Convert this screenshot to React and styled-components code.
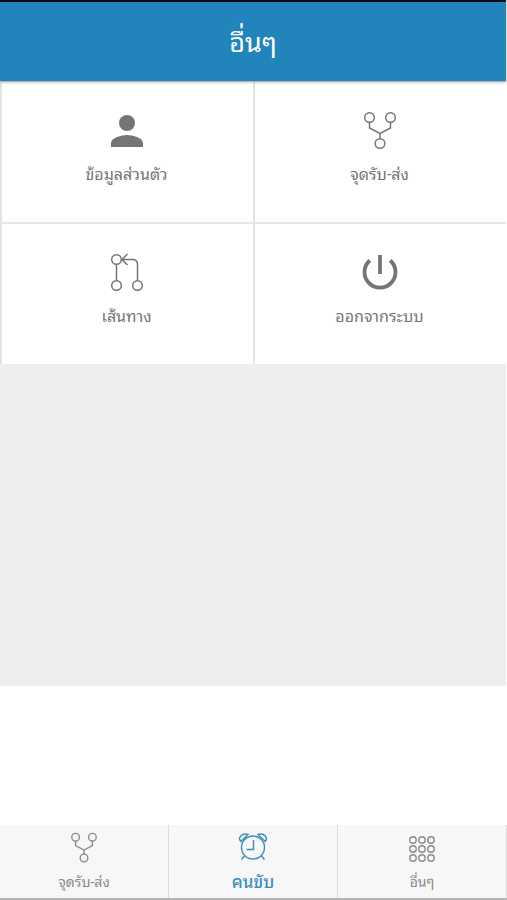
import React from 'react'
import styled, { createGlobalStyle, css } from 'styled-components'

const GlobalStyle = createGlobalStyle`
  * {
    box-sizing: border-box;
  }

  body {
    margin: 0;
    background: #fff;
    font-family: Roboto, 'Noto Sans Thai Looped', 'Noto Sans Thai', 'Noto Sans', sans-serif;
  }
`

const resetButton = css`
  margin: 0;
  padding: 0;
  border: 0;
  font-family: inherit;
  cursor: pointer;
`

const Screen = styled.div`
  display: flex;
  flex-direction: column;
  min-height: 100vh;
  padding-right: 1px;
`

const Header = styled.header`
  position: relative;
  display: flex;
  align-items: center;
  justify-content: center;
  height: 81px;
  padding-top: 2px;
  border-top: 2px solid #060a1c;
  background: #2185bb;
  box-shadow: 0 1px 3px rgba(0, 0, 0, 0.35);
`

const Title = styled.h1`
  margin: 0;
  color: #fff;
  font-size: 27px;
  font-weight: 400;
  line-height: 40px;
`

const Content = styled.main`
  flex: 1;
  margin-bottom: 139px;
  background: #eee;
`

const Grid = styled.div`
  display: grid;
  grid-template-columns: 1fr 1fr;
  row-gap: 2px;
  padding-top: 1px;
  background: #e6e6e6;
`

const Tile = styled.button`
  ${resetButton}
  display: flex;
  flex-direction: column;
  align-items: center;
  gap: 12px;
  height: 140px;
  padding-top: 29px;
  padding-right: 2px;
  border-left: 2px solid #e4e4e4;
  background: #fff;
  color: #757575;
  font-size: 16px;
  line-height: 24px;
`

const TabBar = styled.nav`
  display: grid;
  grid-template-columns: repeat(3, 1fr);
  height: 75px;
  margin-right: -1px;
  border-bottom: 2px solid #b4b4b4;
  background: #f7f7f7;
`

const Tab = styled.button`
  ${resetButton}
  display: flex;
  flex-direction: column;
  align-items: center;
  gap: 6px;
  padding-top: 7px;
  border-right: 1px solid #dcdcdc;
  background: transparent;
  color: ${({ $active }) => ($active ? '#3a8fb7' : '#8a8a8a')};
  font-size: ${({ $active }) => ($active ? '17px' : '14px')};
  font-weight: ${({ $active }) => ($active ? 500 : 400)};
  line-height: 24px;
`

const Icon = styled.svg.attrs({ 'aria-hidden': true })`
  display: block;
  flex: none;
  width: ${({ $size }) => $size}px;
  height: ${({ $size }) => $size}px;
  fill: none;
  stroke: currentColor;
  stroke-width: ${({ $stroke }) => $stroke || 1.5};
`

function PersonIcon() {
  return (
    <Icon $size={40} viewBox="0 0 40 40">
      <g fill="currentColor" stroke="none">
        <circle cx="20" cy="12" r="8" />
        <path d="M4 36v-4c0-5.300 10.700-8 16-8s16 2.700 16 8v4z" />
      </g>
    </Icon>
  )
}

function ForkIcon({ size, stroke }) {
  return (
    <Icon $size={size} $stroke={stroke} viewBox="0 0 40 40">
      <circle cx="9.500" cy="6.500" r="4.800" />
      <circle cx="30.500" cy="6.500" r="4.800" />
      <circle cx="20" cy="32.500" r="4.800" />
      <path d="M9.500 11.500V17L20 22.500 30.500 17v-5.500M20 22.500v5" />
    </Icon>
  )
}

function RouteIcon() {
  return (
    <Icon $size={40} viewBox="0 0 40 40">
      <circle cx="9.500" cy="6.500" r="4.800" />
      <circle cx="9.500" cy="32.500" r="4.800" />
      <circle cx="30.500" cy="32.500" r="4.800" />
      <path d="M9.500 11.500v16M30.500 27.500v-16q0-5-5-5H15M20.500 1L15 6.500l5.500 5.500" />
    </Icon>
  )
}

function PowerIcon() {
  return (
    <Icon $size={40} $stroke={3.8} viewBox="0 0 40 40">
      <path d="M20 2v19M9.800 7.500a15.500 15.500 0 1 0 20.400 0" />
    </Icon>
  )
}

function AlarmIcon() {
  return (
    <Icon $size={32} $stroke={1.4} viewBox="0 0 32 32">
      <circle cx="16" cy="15.500" r="11.500" />
      <path d="M16.500 8v9.500h-7" />
      <path d="M3.800 9.500C.5 5.500 5 .5 11 2.500zM28.200 9.500C31.500 5.500 27 .5 21 2.500z" />
      <path d="M7.500 24l-3 3.500M24.500 24l3 3.500" />
    </Icon>
  )
}

function DotsIcon() {
  const positions = [7, 16, 25]

  return (
    <Icon $size={32} $stroke={1.4} viewBox="0 0 32 32">
      {positions.map((y) =>
        positions.map((x) => <circle key={`${x}-${y}`} cx={x} cy={y + 1} r="3.200" />)
      )}
    </Icon>
  )
}

const menus = [
  { title: 'ข้อมูลส่วนตัว', icon: <PersonIcon /> },
  { title: 'จุดรับ-ส่ง', icon: <ForkIcon size={40} /> },
  { title: 'เส้นทาง', icon: <RouteIcon /> },
  { title: 'ออกจากระบบ', icon: <PowerIcon /> },
]

const tabs = [
  { title: 'จุดรับ-ส่ง', icon: <ForkIcon size={32} stroke={1.7} /> },
  { title: 'คนขับ', icon: <AlarmIcon />, isActive: true },
  { title: 'อื่นๆ', icon: <DotsIcon /> },
]

function App() {
  return (
    <Screen lang="th">
      <GlobalStyle />
      <Header>
        <Title>อื่นๆ</Title>
      </Header>
      <Content>
        <Grid>
          {menus.map(({ title, icon }) => (
            <Tile key={title} type="button">
              {icon}
              {title}
            </Tile>
          ))}
        </Grid>
      </Content>
      <TabBar>
        {tabs.map(({ title, icon, isActive }) => (
          <Tab key={title} type="button" $active={isActive}>
            {icon}
            {title}
          </Tab>
        ))}
      </TabBar>
    </Screen>
  )
}

export default App
